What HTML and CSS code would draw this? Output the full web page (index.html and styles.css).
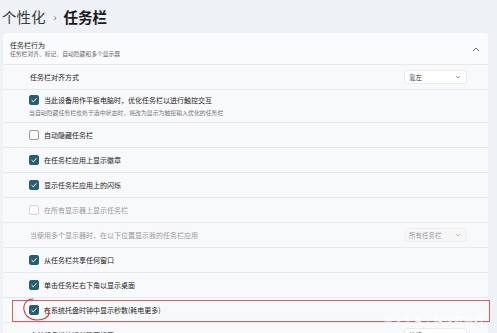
FILE: index.html
```html
<!DOCTYPE html>
<html lang="zh-CN">
<head>
    <meta charset="UTF-8">
    <title>个性化 - 任务栏</title>
    <link rel="stylesheet" href="styles.css">
</head>
<body>
    <div class="page">
        <h1 class="title">
            <span class="crumb">个性化</span>
            <span class="sep">›</span>
            <span class="current">任务栏</span>
        </h1>

        <div class="card">
            <div class="card-header">
                <div>
                    <div class="header-title">任务栏行为</div>
                    <div class="header-sub">任务栏对齐、标记、自动隐藏和多个显示器</div>
                </div>
                <svg class="chevron-up" width="8" height="5" viewBox="0 0 8 5"><path d="M1 4 L4 1 L7 4" fill="none" stroke="#555" stroke-width="0.9"/></svg>
            </div>

            <div class="row">
                <span class="label plain">任务栏对齐方式</span>
                <div class="select">靠左<svg width="6" height="4" viewBox="0 0 6 4"><path d="M1 1 L3 3 L5 1" fill="none" stroke="#888" stroke-width="0.8"/></svg></div>
            </div>

            <div class="row tall">
                <div>
                    <div class="check-line">
                        <span class="box on"><svg width="8" height="8" viewBox="0 0 8 8"><path d="M1.6 4.2 L3.3 5.8 L6.4 2.3" fill="none" stroke="#fff" stroke-width="1"/></svg></span>
                        <span class="label">当此设备用作平板电脑时，优化任务栏以进行触控交互</span>
                    </div>
                    <div class="row-sub">当自动隐藏任务栏也处于选中状态时，将改为显示为触控输入优化的任务栏</div>
                </div>
            </div>

            <div class="row">
                <span class="box"></span>
                <span class="label">自动隐藏任务栏</span>
            </div>

            <div class="row">
                <span class="box on"><svg width="8" height="8" viewBox="0 0 8 8"><path d="M1.6 4.2 L3.3 5.8 L6.4 2.3" fill="none" stroke="#fff" stroke-width="1"/></svg></span>
                <span class="label">在任务栏应用上显示徽章</span>
            </div>

            <div class="row">
                <span class="box on"><svg width="8" height="8" viewBox="0 0 8 8"><path d="M1.6 4.2 L3.3 5.8 L6.4 2.3" fill="none" stroke="#fff" stroke-width="1"/></svg></span>
                <span class="label">显示任务栏应用上的闪烁</span>
            </div>

            <div class="row">
                <span class="box off"></span>
                <span class="label muted">在所有显示器上显示任务栏</span>
            </div>

            <div class="row">
                <span class="label plain muted">当使用多个显示器时，在以下位置显示我的任务栏应用</span>
                <div class="select dim">所有任务栏<svg width="6" height="4" viewBox="0 0 6 4"><path d="M1 1 L3 3 L5 1" fill="none" stroke="#aaa" stroke-width="0.8"/></svg></div>
            </div>

            <div class="row">
                <span class="box on"><svg width="8" height="8" viewBox="0 0 8 8"><path d="M1.6 4.2 L3.3 5.8 L6.4 2.3" fill="none" stroke="#fff" stroke-width="1"/></svg></span>
                <span class="label">从任务栏共享任何窗口</span>
            </div>

            <div class="row">
                <span class="box on"><svg width="8" height="8" viewBox="0 0 8 8"><path d="M1.6 4.2 L3.3 5.8 L6.4 2.3" fill="none" stroke="#fff" stroke-width="1"/></svg></span>
                <span class="label">单击任务栏右下角以显示桌面</span>
            </div>

            <div class="row marked">
                <span class="box on"><svg width="8" height="8" viewBox="0 0 8 8"><path d="M1.6 4.2 L3.3 5.8 L6.4 2.3" fill="none" stroke="#fff" stroke-width="1"/></svg></span>
                <span class="label">在系统托盘时钟中显示秒数(耗电更多)</span>
                <div class="red-box"></div>
                <svg class="red-circle" width="32" height="26" viewBox="0 0 32 26"><path d="M12 2 C6 2 2 7 3 13 C4 19 9 23 16 23 C23 23 28 20 28 16 C28 13 26 12 25 13" fill="none" stroke="#d9363e" stroke-width="1.1" stroke-linecap="round"/></svg>
                <span class="watermark">@头条号 / 科技数码君</span>
            </div>

            <div class="row">
                <span class="label plain">合并任务栏按钮并隐藏标签</span>
                <div class="select">始终<svg width="6" height="4" viewBox="0 0 6 4"><path d="M1 1 L3 3 L5 1" fill="none" stroke="#888" stroke-width="0.8"/></svg></div>
            </div>
        </div>
    </div>
</body>
</html>
```

FILE: styles.css
```css
body {
    margin: 0;
    background: #eef1f5;
    font-family: "Noto Sans CJK SC", "Noto Sans", sans-serif;
    color: #1b1b1b;
    overflow: hidden;
}
.page {
    padding: 0 9px 0 3px;
}
.title {
    margin: 0;
    height: 33px;
    display: flex;
    align-items: center;
    font-size: 14.5px;
    font-weight: 400;
}
.title .crumb {
    color: #3a3a3a;
    margin-left: -1px;
}
.title .sep {
    font-size: 10px;
    color: #666;
    margin: 0 7px 0 8px;
}
.title .current {
    font-weight: 700;
    color: #1a1a1a;
}
.card {
    background: #e5e8ec;
    display: flex;
    flex-direction: column;
    gap: 1px;
    border-radius: 3px;
}
.card-header {
    background: #fafbfc;
    height: 31px;
    padding: 0 8px 0 7px;
    display: flex;
    align-items: center;
    justify-content: space-between;
    border-radius: 3px 3px 0 0;
}
.header-title {
    font-size: 7px;
    line-height: 10px;
}
.header-sub {
    font-size: 5.8px;
    line-height: 8px;
    color: #666;
}
.chevron-up {
    margin-top: 2px;
}
.row {
    position: relative;
    background: #f8f9fa;
    height: 24px;
    padding: 0 21px 0 26px;
    display: flex;
    align-items: center;
}
.row.tall {
    height: 32px;
}
.label {
    font-size: 7px;
    color: #222;
}
.label.plain {
    margin-left: 1px;
    flex: 1;
}
.label.muted {
    color: #9a9a9a;
}
.check-line {
    display: flex;
    align-items: center;
}
.row-sub {
    font-size: 5.9px;
    color: #777;
    margin-top: 3px;
}
.box {
    width: 10px;
    height: 10px;
    box-sizing: border-box;
    border: 1px solid #9a9a9a;
    border-radius: 2px;
    background: #fbfbfb;
    margin-right: 5px;
    display: flex;
    align-items: center;
    justify-content: center;
    flex-shrink: 0;
}
.box.on {
    background: #245f73;
    border-color: #245f73;
}
.box.off {
    border-color: #d4d4d4;
}
.select {
    width: 63px;
    height: 14px;
    box-sizing: border-box;
    background: #fff;
    border: 1px solid #ececec;
    border-radius: 3px;
    padding: 0 5px 0 4px;
    display: flex;
    align-items: center;
    justify-content: space-between;
    font-size: 6.5px;
    color: #333;
}
.select.dim {
    background: #f6f6f7;
    border-color: #f0f0f0;
    color: #999;
}
.red-box {
    position: absolute;
    left: 9px;
    right: -2px;
    top: 2px;
    bottom: 0;
    border: 1.5px solid #d85f63;
}
.red-circle {
    position: absolute;
    left: 18px;
    top: -1px;
}
.watermark {
    position: absolute;
    right: 4px;
    bottom: -4px;
    font-size: 9px;
    color: rgba(255, 255, 255, 0.9);
    letter-spacing: 1px;
}
```
